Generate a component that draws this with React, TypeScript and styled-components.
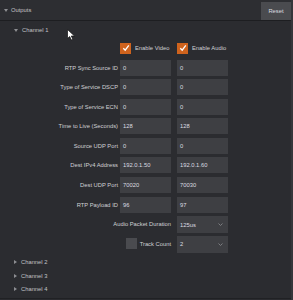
import React from "react";
import styled, { createGlobalStyle } from "styled-components";

const GlobalStyle = createGlobalStyle`
  html, body {
    margin: 0;
    padding: 0;
    background: #2b2c30;
  }
  body {
    font-family: "Liberation Sans", Arial, sans-serif;
    color: #c4c5c8;
  }
`;

const Panel = styled.div`
  position: relative;
  width: 293px;
  height: 300px;
  box-sizing: border-box;
  background: #2b2c30;
  border-right: 2px solid #35363a;
  overflow: hidden;
`;

const Header = styled.div`
  height: 21px;
  box-sizing: border-box;
  display: flex;
  align-items: center;
  padding: 0 0 0 4px;
  border-bottom: 1px solid #1d1e21;
  background: #2d2e32;
`;

const Title = styled.div`
  flex: 1;
  display: flex;
  align-items: center;
  gap: 3px;
  font-size: 5.8px;
  color: #c2c3c6;
`;

const ResetButton = styled.button`
  width: 30px;
  height: 18px;
  margin-top: 1px;
  border: none;
  padding: 0;
  background: #4a4b4f;
  color: #dcdde0;
  font-family: inherit;
  font-size: 5.8px;
`;

const Body = styled.div`
  border-bottom: 1px solid #202124;
  height: 276px;
`;

const ChannelRow = styled.div<{ $first?: boolean }>`
  height: ${(p) => (p.$first ? "16px" : "13.5px")};
  margin-top: ${(p) => (p.$first ? "1px" : "0")};
  display: flex;
  align-items: center;
  gap: 4px;
  padding-left: 14px;
  font-size: 5.8px;
  color: #c2c3c6;
`;

const Caret = styled.span<{ $open?: boolean }>`
  display: inline-block;
  width: 0;
  height: 0;
  ${(p) =>
    p.$open
      ? `border-left: 2.5px solid transparent;
         border-right: 2.5px solid transparent;
         border-top: 3px solid #8d8e92;`
      : `border-top: 2.5px solid transparent;
         border-bottom: 2.5px solid transparent;
         border-left: 3px solid #8d8e92;`}
`;

const Form = styled.div`
  display: grid;
  grid-template-columns: 120px 57px 51px;
  grid-auto-rows: 16px;
  row-gap: 3.57px;
  margin-top: 2px;
`;

const Label = styled.div<{ $span?: boolean }>`
  grid-column: ${(p) => (p.$span ? "1 / 3" : "1")};
  display: flex;
  align-items: center;
  justify-content: flex-end;
  gap: 3px;
  padding-right: ${(p) => (p.$span ? "6px" : "2px")};
  font-size: 5.8px;
  color: #d0d1d4;
  white-space: nowrap;
`;

const Field = styled.div`
  width: 51px;
  box-sizing: border-box;
  display: flex;
  align-items: center;
  padding-left: 3px;
  background: #3e3f43;
  font-size: 5.8px;
  color: #dcdde0;
`;

const Select = styled(Field)`
  height: 17px;
  justify-content: space-between;
  padding-right: 5px;
`;

const CheckCell = styled.div`
  display: flex;
  align-items: center;
  gap: 4px;
  font-size: 5.8px;
  color: #d0d1d4;
  white-space: nowrap;
`;

const Box = styled.span<{ $checked?: boolean }>`
  width: 11px;
  height: 11px;
  flex: none;
  display: flex;
  align-items: center;
  justify-content: center;
  background: ${(p) => (p.$checked ? "#cf631d" : "#4a4b4f")};
`;

const ChannelList = styled.div`
  margin-top: 4px;
`;

const Cursor = styled.svg`
  position: absolute;
  left: 67px;
  top: 29px;
`;

const Check = () => (
  <svg width="8" height="8" viewBox="0 0 8 8">
    <path d="M1.3 4.2 L3.2 6.2 L6.8 1.4" fill="none" stroke="#fff" strokeWidth="1.3" />
  </svg>
);

const Chevron = () => (
  <svg width="5" height="3" viewBox="0 0 5 3">
    <path d="M0.5 0.5 L2.5 2.5 L4.5 0.5" fill="none" stroke="#8a8b8f" strokeWidth="0.8" />
  </svg>
);

const rows: [string, string, string][] = [
  ["RTP Sync Source ID", "0", "0"],
  ["Type of Service DSCP", "0", "0"],
  ["Type of Service ECN", "0", "0"],
  ["Time to Live (Seconds)", "128", "128"],
  ["Source UDP Port", "0", "0"],
  ["Dest IPv4 Address", "192.0.1.50", "192.0.1.60"],
  ["Dest UDP Port", "70020", "70030"],
  ["RTP Payload ID", "96", "97"],
];

export default function App() {
  return (
    <Panel>
      <GlobalStyle />
      <Header>
        <Title>
          <Caret $open />
          Outputs
        </Title>
        <ResetButton>Reset</ResetButton>
      </Header>
      <Body>
        <ChannelRow $first>
          <Caret $open />
          Channel 1
        </ChannelRow>
        <Form>
          <div />
          <CheckCell>
            <Box $checked>
              <Check />
            </Box>
            Enable Video
          </CheckCell>
          <CheckCell>
            <Box $checked>
              <Check />
            </Box>
            Enable Audio
          </CheckCell>
          {rows.map(([label, a, b]) => (
            <React.Fragment key={label}>
              <Label>{label}</Label>
              <Field>{a}</Field>
              <Field>{b}</Field>
            </React.Fragment>
          ))}
          <Label $span>Audio Packet Duration</Label>
          <Select>
            125us
            <Chevron />
          </Select>
          <Label $span>
            <Box />
            Track Count
          </Label>
          <Select>
            2
            <Chevron />
          </Select>
        </Form>
        <ChannelList>
          {["Channel 2", "Channel 3", "Channel 4"].map((c) => (
            <ChannelRow key={c}>
              <Caret />
              {c}
            </ChannelRow>
          ))}
        </ChannelList>
      </Body>
      <Cursor width="9" height="12" viewBox="0 0 9 12">
        <path d="M0.5 0.5 L0.5 9.5 L2.7 7.5 L4.3 11 L5.8 10.3 L4.3 7 L7.5 7 Z" fill="#fff" stroke="#111" strokeWidth="0.7" />
      </Cursor>
    </Panel>
  );
}
